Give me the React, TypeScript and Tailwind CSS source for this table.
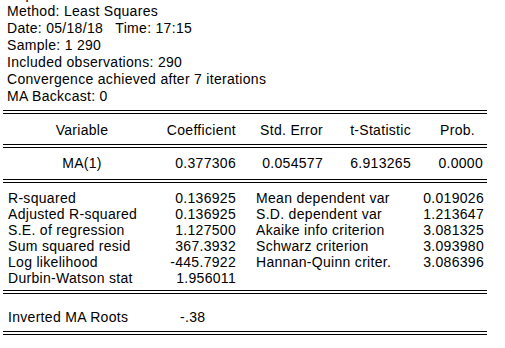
import React from "react";

const header = [
  "Dependent Variable: R",
  "Method: Least Squares",
  "Date: 05/18/18   Time: 17:15",
  "Sample: 1 290",
  "Included observations: 290",
  "Convergence achieved after 7 iterations",
  "MA Backcast: 0",
];

const stats: [string, string, string, string][] = [
  ["R-squared", "0.136925", "Mean dependent var", "0.019026"],
  ["Adjusted R-squared", "0.136925", "S.D. dependent var", "1.213647"],
  ["S.E. of regression", "1.127500", "Akaike info criterion", "3.081325"],
  ["Sum squared resid", "367.3932", "Schwarz criterion", "3.093980"],
  ["Log likelihood", "-445.7922", "Hannan-Quinn criter.", "3.086396"],
  ["Durbin-Watson stat", "1.956011", "", ""],
];

// double rule used between the table sections
const Rule = () => <div className="h-[4px] border-y border-black" />;

export default function App() {
  return (
    <div className="w-[505px] h-[348px] overflow-hidden bg-white text-black text-[14px] tracking-[0.3px] font-['Liberation_Sans',Arial,sans-serif]">
      {/* --- run info --- */}
      <div className="-mt-[14px] pl-[7px] leading-[17px] whitespace-pre">
        {header.map((line) => (
          <div key={line}>{line}</div>
        ))}
      </div>

      {/* --- results table --- */}
      <div className="mt-[5px] ml-[3px] w-[484px] leading-[16px]">
        <Rule />
        <div className="flex pt-[8px] pb-[6px]">
          <div className="w-[158px] text-center">Variable</div>
          <div className="w-[75px] text-right">Coefficient</div>
          <div className="w-[87px] text-right">Std. Error</div>
          <div className="w-[88px] text-right">t-Statistic</div>
          <div className="w-[72px] text-right pr-[8px]">Prob.</div>
        </div>
        <Rule />
        <div className="flex pt-[7px] pb-[8px]">
          <div className="w-[158px] text-center">MA(1)</div>
          <div className="w-[75px] text-right">0.377306</div>
          <div className="w-[87px] text-right">0.054577</div>
          <div className="w-[88px] text-right">6.913265</div>
          <div className="w-[72px] text-right">0.0000</div>
        </div>
        <Rule />
        <div className="pt-[7px] pb-[4px]">
          {stats.map(([a, b, c, d]) => (
            <div key={a} className="flex pl-[5px] h-[16px]">
              <div className="w-[160px]">{a}</div>
              <div className="w-[68px] text-right">{b}</div>
              <div className="w-[20px]" />
              <div className="w-[160px]">{c}</div>
              <div className="w-[68px] text-right">{d}</div>
            </div>
          ))}
        </div>
        <Rule />
        <div className="flex pl-[5px] pt-[15px] pb-[6px]">
          <div className="w-[172px]">Inverted MA Roots</div>
          <div>-.38</div>
        </div>
        <Rule />
      </div>
    </div>
  );
}
